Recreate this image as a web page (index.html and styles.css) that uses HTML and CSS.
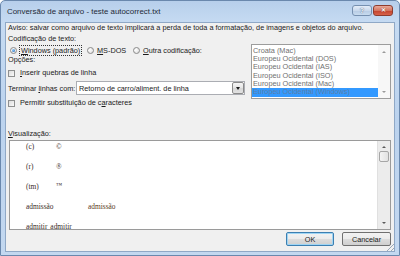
FILE: index.html
```html
<!DOCTYPE html>
<html lang="pt">
<head>
<meta charset="utf-8">
<title>Conversão de arquivo</title>
<link rel="stylesheet" href="styles.css">
</head>
<body>
<div class="window">
  <div class="titlebar">
    <span class="title">Conversão de arquivo - teste autocorrect.txt</span>
    <div class="caption-btns">
      <span class="cap-btn help">?</span>
      <span class="cap-btn close">✕</span>
    </div>
  </div>
  <div class="client">
    <p class="line warn">Aviso: salvar como arquivo de texto implicará a perda de toda a formatação, de imagens e objetos do arquivo.</p>
    <div class="top">
      <div class="left-col">
        <div class="line label-codif">Codificação de texto:</div>
        <div class="radios">
          <label class="radio r1"><span class="rb checked"></span><span class="focus"><u>W</u>indows (padrão)</span></label>
          <label class="radio r2"><span class="rb"></span><span class="rtext"><u>M</u>S-DOS</span></label>
          <label class="radio r3"><span class="rb"></span><span class="rtext"><u>O</u>utra codificação:</span></label>
        </div>
        <div class="line label-opt">Opções:</div>
        <label class="check check-1"><span class="cb"></span><span><u>I</u>nserir quebras de linha</span></label>
        <div class="term-row">
          <span class="term-label">Terminar <u>l</u>inhas com:</span>
          <div class="combo"><span class="combo-text">Retorno de carro/aliment. de linha</span><span class="combo-btn"><span class="tri-down"></span></span></div>
        </div>
        <label class="check check-2"><span class="cb"></span><span>Permitir substituição de c<u>a</u>racteres</span></label>
      </div>
      <div class="listbox">
        <ul class="list-items">
          <li>Croata (Mac)</li>
          <li>Europeu Ocidental (DOS)</li>
          <li>Europeu Ocidental (IAS)</li>
          <li>Europeu Ocidental (ISO)</li>
          <li>Europeu Ocidental (Mac)</li>
          <li class="selected">Europeu Ocidental (Windows)</li>
        </ul>
        <div class="list-scroll">
          <span class="arrow-up small"></span>
          <span class="arrow-down small"></span>
        </div>
      </div>
    </div>
    <div class="line label-vis"><u>V</u>isualização:</div>
    <div class="preview">
      <div class="pv-content">
        <div class="pv-row"><span class="pv-key k-sym">(c)</span><span>©</span></div>
        <div class="pv-row"><span class="pv-key k-sym">(r)</span><span>®</span></div>
        <div class="pv-row"><span class="pv-key k-sym">(tm)</span><span class="tm">™</span></div>
        <div class="pv-row"><span class="pv-key k-long">admissão</span><span class="pv-val">admissão</span></div>
        <div class="pv-row"><span class="pv-key k-short">admitir</span><span>admitir</span></div>
      </div>
      <div class="pv-scroll">
        <span class="arrow-up"></span>
        <span class="thumb"></span>
        <span class="track"></span>
        <span class="arrow-down"></span>
      </div>
    </div>
    <div class="buttons">
      <button class="btn default">OK</button>
      <button class="btn">Cancelar</button>
    </div>
    <div class="grip"></div>
  </div>
</div>
</body>
</html>
```
FILE: styles.css
```css
* { box-sizing: border-box; margin: 0; padding: 0; }
html, body { width: 400px; height: 256px; overflow: hidden; }
body {
  font-family: "Liberation Sans", Arial, sans-serif;
  font-size: 7.3px;
  color: #1b1b1b;
  background: #ffffff;
}
u { text-decoration: underline; text-underline-offset: 1px; }

.window {
  width: 400px;
  height: 256px;
  display: flex;
  flex-direction: column;
  padding: 0 4px 3px 4px;
  border: 1px solid #6a88ad;
  border-radius: 5px 5px 0 0;
  background: linear-gradient(#b7cfeb, #c6dbf2 22px, #bcd3ee 120px, #c3d8f0);
}

/* title bar */
.titlebar {
  height: 21px;
  display: flex;
  align-items: flex-start;
}
.title {
  margin: 6px 0 0 2px;
  font-size: 7.9px;
  color: #1e2a38;
  line-height: 10px;
}
.caption-btns {
  margin: 4px 2px 0 auto;
  display: flex;
  gap: 1px;
}
.cap-btn {
  width: 20px;
  height: 11px;
  border-radius: 3px;
  display: flex;
  align-items: center;
  justify-content: center;
  font-size: 7px;
  line-height: 11px;
  font-weight: bold;
}
.help {
  border: 1px solid #7690b0;
  background: linear-gradient(#e4edf8, #c9d9ec 50%, #b6cbe3 51%, #c8dbef);
  color: #f4f8fc;
  text-shadow: 0 0 1px #5d7391, 0 0 1px #5d7391;
}
.close {
  border: 1px solid #8e3c2e;
  background: linear-gradient(#e9a99a, #d47560 50%, #c2422c 51%, #d7624a);
  color: #ffffff;
  font-size: 6px;
  text-shadow: 0 0 1px #6d2418;
}

/* client */
.client {
  position: relative;
  height: 230px;
  background: #f0f0f0;
  border: 1px solid #8fa8c6;
  padding: 0 3px 0 2px;
  display: flex;
  flex-direction: column;
}
.line { line-height: 10px; height: 10px; white-space: nowrap; }
.warn { color: #1b1b1b; }
.label-codif { margin-top: 1px; }

.top { display: flex; }
.left-col { flex: 1; display: flex; flex-direction: column; }

.radios {
  margin-top: 1px;
  height: 11px;
  display: flex;
  align-items: center;
  padding-left: 2px;
}
.radio { display: flex; align-items: center; white-space: nowrap; }
.r1 { width: 77px; }
.r2 { width: 46px; }
.rb {
  width: 7px;
  height: 7px;
  border-radius: 50%;
  border: 1px solid #8a8a8a;
  background: radial-gradient(circle at 35% 35%, #ffffff, #dadada);
  margin-right: 2px;
  position: relative;
  flex: none;
}
.rb.checked::after {
  content: "";
  position: absolute;
  left: 1px;
  top: 1px;
  width: 3px;
  height: 3px;
  border-radius: 50%;
  background: radial-gradient(circle at 35% 35%, #8fd0ff, #1d5fb0);
}
.focus {
  border: 1px dotted #333;
  padding: 0 1px;
  line-height: 9px;
}
.rtext { padding-left: 1px; }

.label-opt { margin-top: -1px; }

.check {
  display: flex;
  align-items: center;
  height: 10px;
  line-height: 10px;
  white-space: nowrap;
}
.check-1 { margin-top: 3px; }
.check-2 { margin-top: 3px; }
.cb {
  width: 7px;
  height: 7px;
  border: 1px solid #8e8f8f;
  background: linear-gradient(135deg, #dcdcdc, #fafafa);
  margin-right: 5px;
  flex: none;
}

.term-row {
  margin-top: 3px;
  height: 14px;
  display: flex;
  align-items: center;
}
.term-label { width: 68px; white-space: nowrap; }
.combo {
  width: 169px;
  height: 14px;
  border: 1px solid #abadb3;
  background: #ffffff;
  display: flex;
  align-items: center;
  padding-left: 2px;
}
.combo-text { flex: 1; white-space: nowrap; }
.combo-btn {
  width: 12px;
  height: 12px;
  border: 1px solid #8a8a8a;
  border-radius: 2px;
  background: linear-gradient(#f6f6f6, #e4e4e4 50%, #d6d6d6 51%, #e2e2e2);
  display: flex;
  align-items: center;
  justify-content: center;
}
.tri-down {
  width: 0;
  height: 0;
  border-left: 2.5px solid transparent;
  border-right: 2.5px solid transparent;
  border-top: 3px solid #1a1a1a;
}

/* list box */
.listbox {
  width: 140px;
  height: 55px;
  margin-top: 11px;
  border: 1px solid #9c9c9c;
  background: #ffffff;
  display: flex;
  overflow: hidden;
}
.list-items {
  flex: 1;
  list-style: none;
  padding-top: 1.5px;
}
.list-items li {
  height: 8.35px;
  line-height: 8.35px;
  padding-left: 1px;
  color: #707070;
  white-space: nowrap;
}
.list-items li.selected {
  background: #3399ff;
  color: #5c7fa8;
}
.list-scroll {
  width: 12px;
  background: #f7f7f7;
  display: flex;
  flex-direction: column;
  align-items: center;
  justify-content: space-between;
  padding: 6px 0 5px;
}

.arrow-up, .arrow-down {
  width: 0;
  height: 0;
  border-left: 2.5px solid transparent;
  border-right: 2.5px solid transparent;
}
.arrow-up { border-bottom: 2.5px solid #5a5a5a; }
.arrow-down { border-top: 2.5px solid #5a5a5a; }
.arrow-up.small { border-bottom-color: #9a9a9a; }
.arrow-down.small { border-top-color: #9a9a9a; }

.label-vis { margin-top: 21px; }

/* preview */
.preview {
  height: 90px;
  margin-top: 1px;
  margin-left: 1px;
  border: 1px solid #9a9a9a;
  background: #ffffff;
  display: flex;
}
.pv-content {
  flex: 1;
  overflow: hidden;
  padding-left: 16px;
  font-family: "Liberation Serif", "Times New Roman", serif;
  font-size: 7.4px;
  color: #3a2c28;
  display: flex;
  flex-direction: column;
  gap: 8px;
}
.pv-row { display: flex; line-height: 12px; height: 12px; flex: none; white-space: nowrap; }
.k-sym { width: 30px; }
.k-long { width: 62px; }
.k-short { margin-right: 3px; }
.tm { font-size: 6px; line-height: 9px; }
.pv-val { color: #5a3822; }

.pv-scroll {
  width: 13px;
  background: #ececec;
  border-left: 1px solid #e0e0e0;
  display: flex;
  flex-direction: column;
  align-items: center;
  padding: 5px 0 5px;
}
.pv-scroll .thumb {
  margin-top: 3px;
  width: 10px;
  height: 11px;
  border: 1px solid #a6a6a6;
  border-radius: 2px;
  background: linear-gradient(90deg, #f4f4f4, #e2e2e2);
}
.pv-scroll .track { flex: 1; }

/* buttons */
.buttons {
  margin-top: 2px;
  display: flex;
  justify-content: flex-end;
  gap: 8px;
}
.btn {
  height: 14px;
  width: 49px;
  font-family: "Liberation Sans", Arial, sans-serif;
  font-size: 7.3px;
  color: #1b1b1b;
  border: 1px solid #707070;
  border-radius: 2px;
  background: linear-gradient(#f2f2f2, #ebebeb 50%, #dddddd 51%, #cfcfcf);
}
.btn.default {
  width: 48px;
  border-color: #3c7fb1;
  box-shadow: inset 0 0 0 1px #9fd5f4;
}

.grip {
  position: absolute;
  right: 0;
  bottom: 0;
  width: 7px;
  height: 7px;
  background:
    linear-gradient(135deg, transparent 45%, #9aa8b8 45%, #9aa8b8 55%, transparent 55%),
    linear-gradient(135deg, transparent 72%, #9aa8b8 72%, #9aa8b8 82%, transparent 82%);
}
```
